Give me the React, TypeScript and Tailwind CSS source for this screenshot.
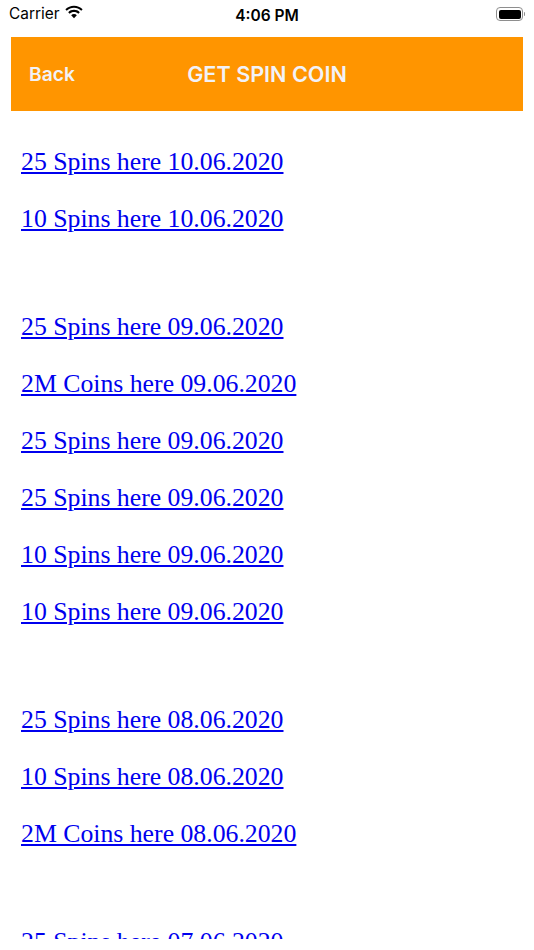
const groups = [
  ['25 Spins here 10.06.2020', '10 Spins here 10.06.2020'],
  [
    '25 Spins here 09.06.2020',
    '2M Coins here 09.06.2020',
    '25 Spins here 09.06.2020',
    '25 Spins here 09.06.2020',
    '10 Spins here 09.06.2020',
    '10 Spins here 09.06.2020',
  ],
  ['25 Spins here 08.06.2020', '10 Spins here 08.06.2020', '2M Coins here 08.06.2020'],
  ['25 Spins here 07.06.2020'],
];

function Wifi() {
  return (
    <svg width="20" height="15" viewBox="0 0 19 14" fill="#000" className="-mt-[2px]">
      <path d="M9.5 2.6c2.6 0 5 1 6.9 2.7l1.3-1.4C15.500 1.800 12.600.6 9.500.6S3.500 1.800 1.300 3.900l1.300 1.400C4.500 3.600 6.900 2.600 9.500 2.600z" />
      <path d="M9.500 6.500c1.600 0 3 .6 4.100 1.600l1.400-1.400C13.500 5.300 11.600 4.500 9.500 4.500s-4 .8-5.500 2.200l1.400 1.400C6.500 7.100 7.900 6.500 9.500 6.500z" />
      <path d="M9.500 8.400c-1.100 0-2 .4-2.700 1.100l2.700 2.900 2.700-2.900C11.500 8.800 10.600 8.400 9.500 8.400z" />
    </svg>
  );
}

function Battery() {
  return (
    <div className="flex items-center gap-px">
      <div className="w-[27px] h-[14px] rounded-[4px] border border-[#8e8e8e] p-[1.5px]">
        <div className="w-full h-full rounded-[2px] bg-black" />
      </div>
      <div className="w-px h-[4px] rounded-r-sm bg-[#8e8e8e]" />
    </div>
  );
}

export default function App() {
  return (
    <div className="h-[950px] bg-white overflow-hidden font-['Inter',sans-serif]">
      {/* Status bar */}
      <div className="relative h-[37px] flex items-center justify-between pl-[9px] pr-[9px] pb-[9px] text-black">
        <div className="flex items-center gap-[5px]">
          <span className="text-[15.4px]">Carrier</span>
          <Wifi />
        </div>
        <span className="absolute left-0 right-0 top-[4px] text-center text-[15.500px] font-semibold">4:06 PM</span>
        <Battery />
      </div>

      {/* Header */}
      <div className="mx-[11px] h-[74px] bg-[#ff9500] flex items-center relative text-[#f2f2f7] font-semibold">
        <span className="pl-[18px] text-[19.25px]">Back</span>
        <span className="absolute left-0 right-0 text-center text-[21.6px]">GET SPIN COIN</span>
      </div>

      {/* Link list */}
      <div className="h-[828px] overflow-hidden px-[21px] pt-[36px] flex flex-col gap-[79px] font-['Liberation_Serif',serif] text-[25.75px] leading-[29px]">
        {groups.map((links, i) => (
          <div key={i} className="flex flex-col gap-[28px] items-start">
            {links.map((label, j) => (
              <a key={j} href="#" className="text-[#0000ee] underline">
                {label}
              </a>
            ))}
          </div>
        ))}
      </div>
    </div>
  );
}
